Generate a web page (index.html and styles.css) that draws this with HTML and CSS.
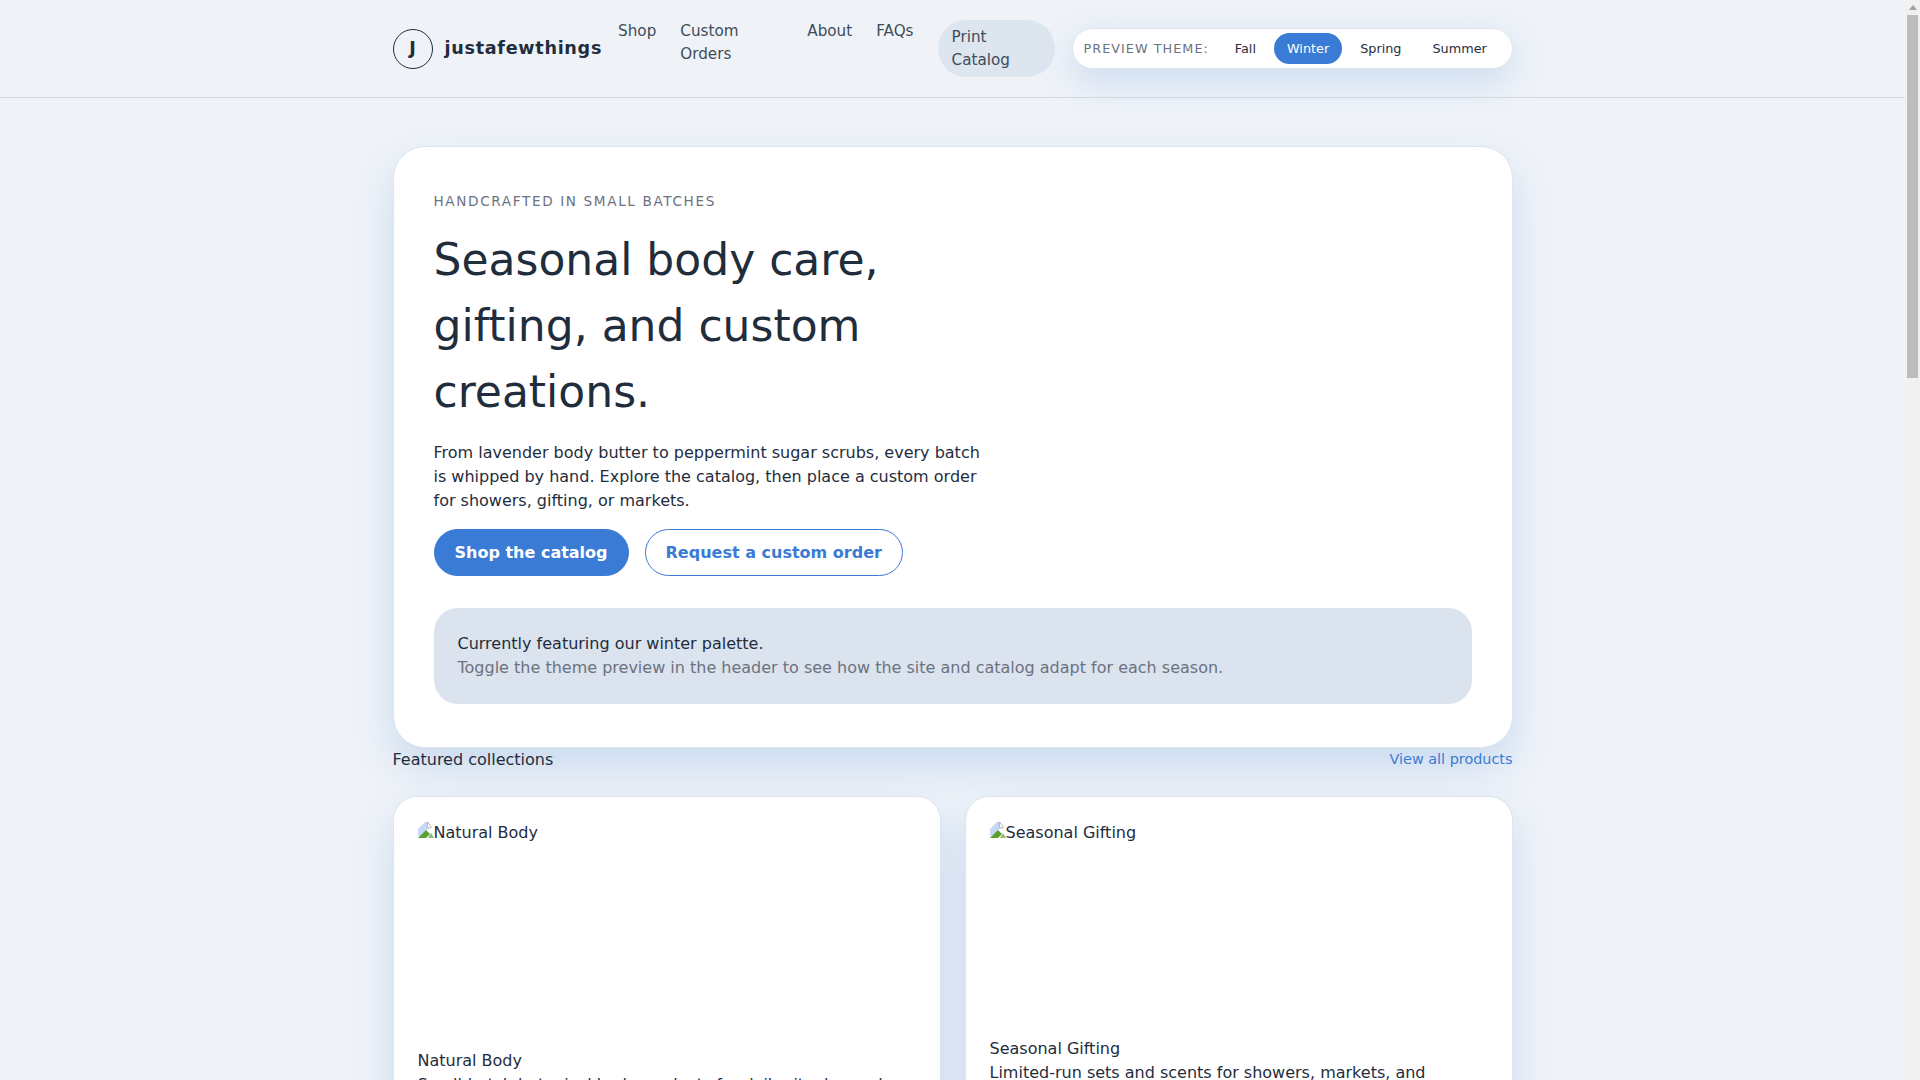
FILE: index.html
```html
<!DOCTYPE html>
<html lang="en">
<head>
  <meta charset="UTF-8">
  <meta name="viewport" content="width=device-width, initial-scale=1.0">
  <title>justafewthings</title>
  <link rel="stylesheet" href="styles.css">
</head>
<body>
  <header class="site-header">
    <div class="header-inner">
      <a class="brand" href="#">
        <span class="brand-mark">J</span>
        <span class="brand-name">justafewthings</span>
      </a>
      <nav class="main-nav">
        <a class="nav-link" href="#">Shop</a>
        <a class="nav-link nav-custom" href="#">Custom Orders</a>
        <a class="nav-link" href="#">About</a>
        <a class="nav-link" href="#">FAQs</a>
        <a class="nav-print" href="#">Print Catalog</a>
      </nav>
      <div class="theme-switch">
        <span class="theme-label">Preview theme:</span>
        <button class="theme-btn">Fall</button>
        <button class="theme-btn active">Winter</button>
        <button class="theme-btn">Spring</button>
        <button class="theme-btn">Summer</button>
      </div>
    </div>
  </header>

  <main class="page">
    <section class="hero">
      <p class="eyebrow">Handcrafted in small batches</p>
      <h1>Seasonal body care, gifting, and custom creations.</h1>
      <p class="lead">From lavender body butter to peppermint sugar scrubs, every batch is whipped by hand. Explore the catalog, then place a custom order for showers, gifting, or markets.</p>
      <div class="hero-actions">
        <a class="btn btn-primary" href="#">Shop the catalog</a>
        <a class="btn btn-outline" href="#">Request a custom order</a>
      </div>
      <div class="season-note">
        <p>Currently featuring our winter palette.</p>
        <p class="muted">Toggle the theme preview in the header to see how the site and catalog adapt for each season.</p>
      </div>
    </section>

    <div class="section-head">
      <h2>Featured collections</h2>
      <a href="#">View all products</a>
    </div>

    <section class="collections">
      <article class="card">
        <div class="card-image card-image-tall">
          <svg class="broken-icon" viewBox="0 0 16 16"><path d="M0 13V7l7-7h4v6l-10 9z" fill="#c5d8f6"/><path d="M9 0l4 4v2h-3z" fill="#fff" stroke="#a8a8a8" stroke-width=".8"/><path d="M0 16l8-8 4 4-4 4z" fill="#5b9e33"/><path d="M13 11l3 5h-6z" fill="#8dbb6c"/></svg>Natural Body
        </div>
        <h3>Natural Body</h3>
        <p>Small-batch botanical body products for daily rituals, made gently for everyday care at home.</p>
      </article>
      <article class="card">
        <div class="card-image">
          <svg class="broken-icon" viewBox="0 0 16 16"><path d="M0 13V7l7-7h4v6l-10 9z" fill="#c5d8f6"/><path d="M9 0l4 4v2h-3z" fill="#fff" stroke="#a8a8a8" stroke-width=".8"/><path d="M0 16l8-8 4 4-4 4z" fill="#5b9e33"/><path d="M13 11l3 5h-6z" fill="#8dbb6c"/></svg>Seasonal Gifting
        </div>
        <h3>Seasonal Gifting</h3>
        <p>Limited-run sets and scents for showers, markets, and thoughtful gifts throughout the year.</p>
      </article>
    </section>
  </main>

  <div class="scrollbar">
    <span class="scroll-arrow"></span>
    <span class="scroll-thumb"></span>
  </div>
</body>
</html>
```

FILE: styles.css
```css
/* Reset and base */
* {
  margin: 0;
  padding: 0;
  box-sizing: border-box;
}
body {
  padding-right: 15px;
  background: #eff3f8;
  color: #1f2d3d;
  font-family: "DejaVu Sans", sans-serif;
  font-size: 16px;
  line-height: 1.5;
}
a {
  color: inherit;
  text-decoration: none;
}

/* Window scrollbar */
.scrollbar {
  position: fixed;
  top: 0;
  right: 0;
  width: 15px;
  height: 100vh;
  background: #f1f1f1;
}
.scroll-arrow {
  display: block;
  width: 0;
  margin: 5px auto 0;
  border-left: 4px solid transparent;
  border-right: 4px solid transparent;
  border-bottom: 5px solid #a3a3a3;
}
.scroll-thumb {
  display: block;
  height: 363px;
  margin: 5px 2px 0;
  background: #bdbdbd;
}

/* Header */
.site-header {
  height: 98px;
  border-bottom: 1px solid #d5dbe3;
}
.header-inner {
  width: 1120px;
  height: 97px;
  margin: 0 auto;
  display: flex;
  align-items: center;
  gap: 16px;
}
.brand {
  display: flex;
  align-items: center;
  gap: 12px;
  flex-shrink: 0;
}
.brand-mark {
  width: 40px;
  height: 40px;
  border: 1px solid #1f2d3d;
  border-radius: 50%;
  display: flex;
  align-items: center;
  justify-content: center;
  font-weight: 700;
  font-size: 17.6px;
}
.brand-name {
  font-weight: 700;
  font-size: 17.6px;
  letter-spacing: 0.04em;
}
.main-nav {
  display: flex;
  gap: 24px;
  flex-shrink: 0;
  font-size: 15.2px;
  line-height: 22.4px;
  color: #3e4c59;
}
.nav-custom {
  width: 103px;
}
.nav-print {
  width: 117px;
  padding: 6px 14px;
  border-radius: 999px;
  background: #dde5ef;
  flex-shrink: 0;
}
.theme-switch {
  width: 441px;
  height: 41px;
  margin-left: auto;
  padding: 0 11px;
  display: flex;
  flex-shrink: 0;
  align-items: center;
  gap: 5px;
  background: #fff;
  border: 1px solid #dde5ef;
  border-radius: 999px;
  box-shadow: 0 12px 36px rgba(58, 123, 213, 0.2);
}
.theme-label {
  font-size: 12.8px;
  letter-spacing: 0.08em;
  text-transform: uppercase;
  color: #6b7280;
  margin-right: 8px;
  white-space: nowrap;
}
.theme-btn {
  border: none;
  background: transparent;
  border-radius: 999px;
  padding: 6px 13px;
  color: #1f2d3d;
  font-family: inherit;
  font-size: 12.8px;
  line-height: 19px;
}
.theme-btn.active {
  background: #3a7bd5;
  color: #fff;
}

/* Page */
.page {
  width: 1120px;
  margin: 0 auto;
  padding-top: 48px;
}

/* Hero */
.hero {
  background: #fff;
  border: 1px solid #dde5ef;
  border-radius: 32px;
  padding: 44px 40px 43px;
  box-shadow: 0 20px 40px rgba(58, 123, 213, 0.2);
}
.eyebrow {
  font-size: 13.6px;
  line-height: 21px;
  letter-spacing: 0.12em;
  text-transform: uppercase;
  color: #6b7280;
  margin-bottom: 15px;
}
h1 {
  max-width: 560px;
  font-size: 44px;
  line-height: 66px;
  font-weight: 500;
  margin-bottom: 16px;
}
.lead {
  max-width: 560px;
  margin-bottom: 16px;
}
.hero-actions {
  display: flex;
  gap: 16px;
  margin-bottom: 32px;
}
.btn {
  height: 47px;
  padding: 0 20px;
  display: flex;
  align-items: center;
  border-radius: 999px;
  border: 1px solid #3a7bd5;
  font-weight: 700;
}
.btn-primary {
  background: #3a7bd5;
  color: #fff;
}
.btn-outline {
  background: #fff;
  color: #3a7bd5;
}
.season-note {
  background: #dbe3ee;
  border-radius: 24px;
  padding: 24px;
}
.muted {
  color: #6b7280;
}

/* Featured collections */
.section-head {
  display: flex;
  justify-content: space-between;
  align-items: center;
  padding-top: 0;
  margin-bottom: 24px;
}
.section-head h2 {
  font-size: 16px;
  font-weight: 400;
}
.section-head a {
  color: #3a7bd5;
  font-size: 14.4px;
}
.collections {
  display: grid;
  grid-template-columns: 1fr 1fr;
  gap: 24px;
}
.card {
  background: #fff;
  border: 1px solid #dde5ef;
  border-radius: 24px;
  padding: 24px;
  box-shadow: 0 20px 40px rgba(58, 123, 213, 0.2);
}
.card-image {
  height: 216px;
}
.card-image-tall {
  height: 228px;
}
.broken-icon {
  width: 16px;
  height: 16px;
  vertical-align: 0;
}
.card h3 {
  font-size: 16px;
  font-weight: 400;
}
```
